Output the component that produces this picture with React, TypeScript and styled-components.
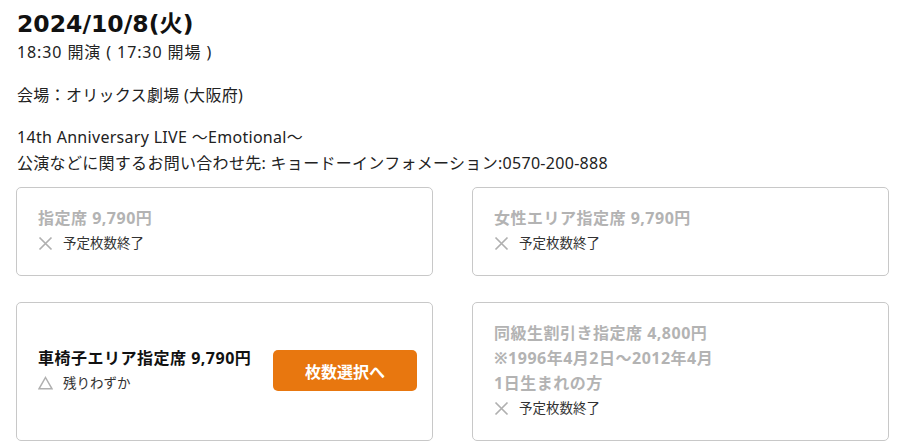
import styled, { createGlobalStyle } from "styled-components";

const GlobalStyle = createGlobalStyle`
    body {
        margin: 0;
        background: #ffffff;
        color: #222222;
        font-family: "Noto Sans", "Noto Sans CJK JP", sans-serif;
    }
`;

type Seat = {
    name: string;
    notes?: string[];
    status: "soldout" | "few";
    available?: boolean;
};

const seats: Seat[] = [
    { name: "指定席 9,790円", status: "soldout" },
    { name: "女性エリア指定席 9,790円", status: "soldout" },
    { name: "車椅子エリア指定席 9,790円", status: "few", available: true },
    {
        name: "同級生割引き指定席 4,800円",
        notes: ["※1996年4月2日～2012年4月", "1日生まれの方"],
        status: "soldout",
    },
];

function CrossIcon() {
    return (
        <svg width="15" height="15" viewBox="0 0 15 15">
            <path d="M1.5 1.5L13.5 13.5M13.5 1.5L1.5 13.5" stroke="#b0b0b0" strokeWidth="1.7" />
        </svg>
    );
}

function TriangleIcon() {
    return (
        <svg width="15" height="14" viewBox="0 0 15 14">
            <path d="M7.5 1.5L14 12.8H1Z" fill="none" stroke="#b0b0b0" strokeWidth="1.5" />
        </svg>
    );
}

function App() {
    return (
        <Page>
            <GlobalStyle />
            <Title>2024/10/8(火)</Title>
            <Line $spacing={0.9}>18:30 開演 ( 17:30 開場 )</Line>
            <Line $gap={17}>会場：オリックス劇場 (大阪府)</Line>
            <Line $gap={16}>14th Anniversary LIVE ～Emotional～</Line>
            <Line>公演などに関するお問い合わせ先: キョードーインフォメーション:0570-200-888</Line>
            <Grid>
                {seats.map((seat) => (
                    <Card key={seat.name}>
                        <Info>
                            <SeatName $active={!!seat.available}>{seat.name}</SeatName>
                            {seat.notes?.map((n) => (
                                <SeatName key={n} $active={false}>
                                    {n}
                                </SeatName>
                            ))}
                            <Status>
                                {seat.status === "soldout" ? <CrossIcon /> : <TriangleIcon />}
                                <span>{seat.status === "soldout" ? "予定枚数終了" : "残りわずか"}</span>
                            </Status>
                        </Info>
                        {seat.available && <SelectButton>枚数選択へ</SelectButton>}
                    </Card>
                ))}
            </Grid>
        </Page>
    );
}

export default App;

const Page = styled.div`
    padding: 9px 16px 0 17px;
`;

const Title = styled.h1`
    margin: 0;
    font-family: "DejaVu Sans", "Noto Sans CJK JP", sans-serif;
    font-size: 23.5px;
    font-weight: 700;
    line-height: 30px;
    color: #111111;
`;

const Line = styled.div<{ $gap?: number; $spacing?: number }>`
    font-size: 16px;
    line-height: 26px;
    letter-spacing: ${({ $spacing }) => $spacing ?? 0.3}px;
    margin-top: ${({ $gap }) => $gap ?? 0}px;
`;

const Grid = styled.div`
    display: grid;
    grid-template-columns: 417px 417px;
    column-gap: 39px;
    row-gap: 26px;
    margin: 11px 0 0 -1px;
`;

const Card = styled.div`
    display: flex;
    align-items: center;
    justify-content: space-between;
    min-height: 89px;
    box-sizing: border-box;
    padding: 18px 15px 20px 21px;
    border: 1px solid #c8c8c8;
    border-radius: 5px;
`;

const Info = styled.div`
    display: flex;
    flex-direction: column;
`;

const SeatName = styled.div<{ $active: boolean }>`
    font-size: 16px;
    font-weight: 700;
    line-height: 25px;
    letter-spacing: 0.5px;
    color: ${({ $active }) => ($active ? "#111111" : "#b3b3b3")};
`;

const Status = styled.div`
    display: flex;
    align-items: center;
    gap: 10px;
    font-size: 13.5px;
    line-height: 24px;
    color: #333333;
`;

const SelectButton = styled.button`
    width: 144px;
    height: 41px;
    border: none;
    border-radius: 5px;
    background: #e8770f;
    color: #ffffff;
    font-family: inherit;
    font-size: 16px;
    font-weight: 700;
    cursor: pointer;
`;
